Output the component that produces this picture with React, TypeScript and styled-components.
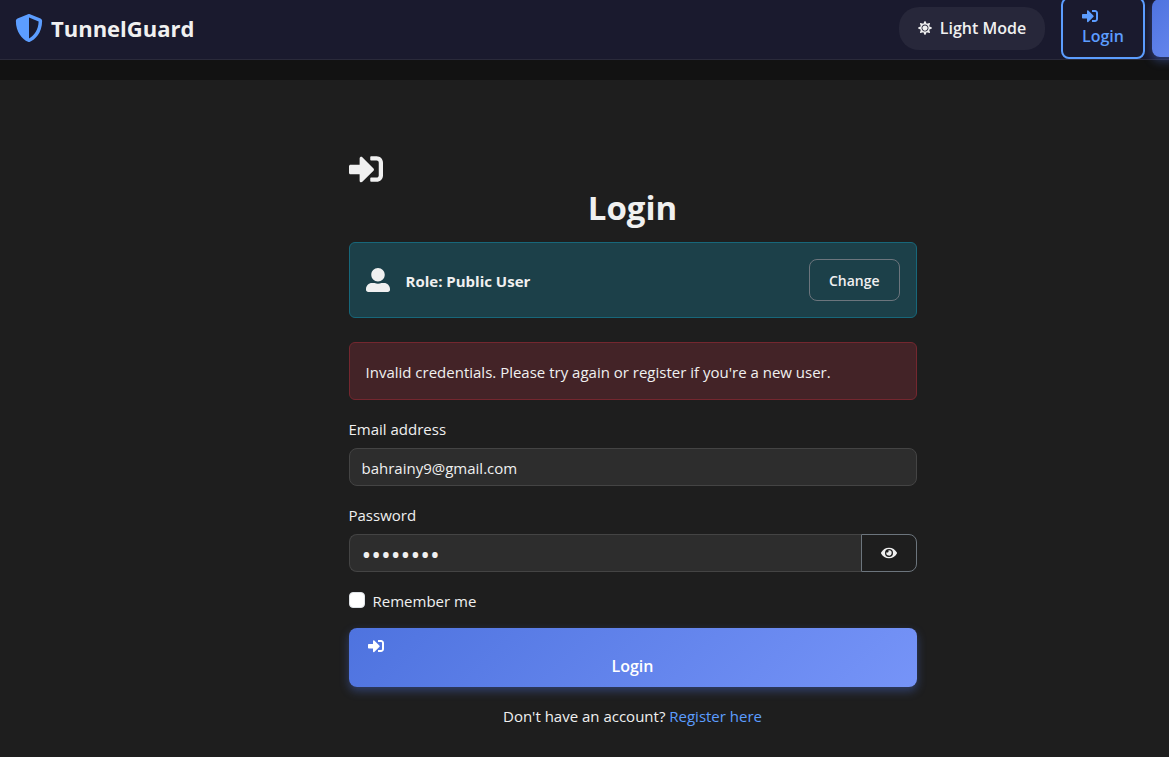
import React, { useState } from "react";
import styled, { createGlobalStyle } from "styled-components";
import { FaShieldAlt, FaSignInAlt, FaUserAlt, FaEye, FaSun } from "react-icons/fa";

const GlobalStyle = createGlobalStyle`
  *, *::before, *::after { box-sizing: border-box; }
  html { background: #1e1e1e; }
  body {
    margin: 0;
    overflow-x: hidden;
    background: #1e1e1e;
    color: #f0f0f0;
    font-family: "Segoe UI", "Open Sans", "Noto Sans", sans-serif;
    font-size: 15px;
    line-height: 24px;
  }
  button, input { font: inherit; color: inherit; }
`;

const Navbar = styled.header`
  display: flex;
  align-items: center;
  justify-content: space-between;
  height: 60px;
  padding: 0 0 3px 15px;
  background: #1a1a2e;
  border-bottom: 1px solid #2a2a3a;
  overflow-x: clip;
`;

const Brand = styled.a`
  display: flex;
  align-items: center;
  gap: 8px;
  color: #f0f0f0;
  font-size: 22px;
  font-weight: 700;
  line-height: 32px;
  text-decoration: none;
  svg { color: #5c9dff; font-size: 28px; }
`;

const NavActions = styled.nav`
  display: flex;
  align-items: center;
  flex: none;
  width: 270px;
`;

const ThemeButton = styled.button`
  display: flex;
  flex: none;
  align-items: center;
  justify-content: center;
  gap: 8px;
  width: 146px;
  height: 43px;
  margin-right: 16px;
  padding: 0;
  border: 0;
  border-radius: 20px;
  background: #27273a;
  font-size: 16px;
  font-weight: 600;
  svg { font-size: 14px; }
`;

const NavButton = styled.a<{ $filled?: boolean }>`
  display: flex;
  flex: none;
  flex-direction: column;
  justify-content: center;
  gap: 2px;
  width: 84px;
  height: ${(p) => (p.$filled ? "58px" : "62px")};
  margin-right: 7px;
  padding: 0 19px 2px;
  border: 2px solid ${(p) => (p.$filled ? "transparent" : "#5c9dff")};
  border-radius: 8px;
  background: ${(p) => (p.$filled ? "linear-gradient(135deg, #4e73df, #7694f8) border-box" : "transparent")};
  box-shadow: ${(p) => (p.$filled ? "0 4px 10px rgba(78, 115, 223, 0.4)" : "none")};
  color: ${(p) => (p.$filled ? "#fff" : "#5c9dff")};
  font-size: 16px;
  font-weight: 600;
  line-height: 20px;
  text-decoration: none;
  svg { font-size: 16px; }
`;

const Band = styled.div`
  height: 20px;
  background: #121212;
`;

const Page = styled.main`
  display: flex;
  justify-content: center;
  padding: 72px 24px 28px 120px;
`;

const Form = styled.form`
  width: 100%;
  max-width: 568px;
`;

const Title = styled.h1`
  display: flex;
  flex-direction: column;
  margin: 0 0 12px;
  font-size: 33px;
  font-weight: 700;
  line-height: 44px;
  text-align: center;
  svg { font-size: 34px; }
`;

const Alert = styled.div<{ $tone: "info" | "danger" }>`
  display: flex;
  align-items: center;
  gap: 16px;
  margin-bottom: ${(p) => (p.$tone === "info" ? "24px" : "16px")};
  padding: ${(p) => (p.$tone === "info" ? "16px" : "17px 16px 15px")};
  border: 1px solid ${(p) => (p.$tone === "info" ? "#17677a" : "#74272f")};
  border-radius: 6px;
  background: ${(p) => (p.$tone === "info" ? "#1c4049" : "#432327")};
  svg { font-size: 24px; }
`;

const Role = styled.strong`
  flex: 1;
  padding-top: 2px;
  font-weight: 700;
`;

const ChangeButton = styled.button`
  padding: 9px 19px 7px;
  border: 1px solid #6c757d;
  border-radius: 8px;
  background: transparent;
  font-size: 14px;
  font-weight: 600;
`;

const Field = styled.div`
  margin-bottom: 16px;
`;

const Label = styled.label`
  display: block;
  margin-bottom: 6px;
  line-height: 26px;
`;

const InputGroup = styled.div`
  display: flex;
`;

const Input = styled.input<{ $joined?: boolean }>`
  flex: 1;
  min-width: 0;
  height: 38px;
  padding: 8px 12px 6px;
  border: 1px solid #444;
  border-right-width: ${(p) => (p.$joined ? "0" : "1px")};
  border-radius: ${(p) => (p.$joined ? "8px 0 0 8px" : "8px")};
  outline: 0;
  background: #2d2d2d;
  &[type="password"] { font-size: 26px; }
`;

const EyeButton = styled.button`
  display: flex;
  align-items: center;
  justify-content: center;
  width: 56px;
  padding: 0;
  border: 1px solid #6c757d;
  border-radius: 0 8px 8px 0;
  background: transparent;
  svg { font-size: 16px; }
`;

const Remember = styled.label`
  display: flex;
  align-items: flex-start;
  gap: 8px;
  width: max-content;
  margin-bottom: 14px;
  line-height: 26px;
`;

const Checkbox = styled.input`
  appearance: none;
  width: 16px;
  height: 16px;
  margin: 4px 0 0;
  border: 1px solid #dee2e6;
  border-radius: 4px;
  background: #fff;
  &:checked { background: #4e73df; }
`;

const Submit = styled.button`
  display: flex;
  flex-direction: column;
  width: 100%;
  padding: 10px 19px;
  gap: 2px;
  border: 0;
  border-radius: 8px;
  background: linear-gradient(135deg, #4e73df, #7694f8);
  box-shadow: 0 4px 10px rgba(78, 115, 223, 0.4);
  color: #fff;
  font-size: 16px;
  font-weight: 600;
  line-height: 21px;
  svg { font-size: 16px; }
  span { align-self: center; }
`;

const Register = styled.p`
  margin: 17px 0 0;
  text-align: center;
  a { color: #5c9dff; text-decoration: none; }
`;

export default function App() {
  const [visible, setVisible] = useState(false);
  return (
    <>
      <GlobalStyle />
      <Navbar>
        <Brand href="#"><FaShieldAlt />TunnelGuard</Brand>
        <NavActions>
          <ThemeButton type="button"><FaSun />Light Mode</ThemeButton>
          <NavButton href="#login"><FaSignInAlt />Login</NavButton>
          <NavButton href="#register" $filled aria-label="Register" />
        </NavActions>
      </Navbar>
      <Band />
      <Page>
        <Form onSubmit={(e) => e.preventDefault()}>
          <Title><FaSignInAlt />Login</Title>
          <Alert $tone="info">
            <FaUserAlt />
            <Role>Role: Public User</Role>
            <ChangeButton type="button">Change</ChangeButton>
          </Alert>
          <Alert $tone="danger" role="alert">
            Invalid credentials. Please try again or register if you're a new user.
          </Alert>
          <Field>
            <Label htmlFor="email">Email address</Label>
            <InputGroup>
              <Input id="email" type="email" defaultValue="bahrainy9@gmail.com" />
            </InputGroup>
          </Field>
          <Field>
            <Label htmlFor="password">Password</Label>
            <InputGroup>
              <Input id="password" $joined type={visible ? "text" : "password"} defaultValue="password" />
              <EyeButton type="button" aria-label="Show password" onClick={() => setVisible(!visible)}>
                <FaEye />
              </EyeButton>
            </InputGroup>
          </Field>
          <Remember><Checkbox type="checkbox" />Remember me</Remember>
          <Submit type="submit"><FaSignInAlt /><span>Login</span></Submit>
          <Register>Don't have an account? <a href="#register">Register here</a></Register>
        </Form>
      </Page>
    </>
  );
}
